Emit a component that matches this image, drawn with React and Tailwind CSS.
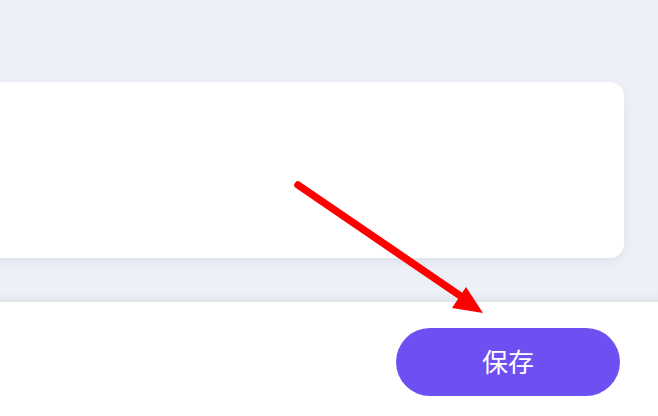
import React from "react";

export default function App() {
  return (
    <div className="relative w-[658px] h-[416px] overflow-hidden bg-white" style={{ fontFamily: '"Noto Sans", "Noto Sans CJK SC", sans-serif' }}>
      <div className="h-[302px] bg-[#eef0f8] pt-[82px] shadow-[inset_0_-10px_10px_-8px_rgba(0,0,0,0.08)]">
        <div className="ml-[-20px] w-[644px] h-[176px] bg-white rounded-[14px] shadow-[0_4px_10px_rgba(60,60,90,0.08)]" />
      </div>
      <div className="flex justify-end pr-[38px] pt-[26px]">
        <button className="w-[224px] h-[68px] rounded-full bg-[#6e4ff2] text-white text-[26px] font-normal leading-none flex items-center justify-center">
          保存
        </button>
      </div>
      <svg className="absolute left-0 top-0" width="658" height="416" viewBox="0 0 658 416">
        <line x1="298" y1="185" x2="462" y2="297" stroke="#ff0000" strokeWidth="7.5" strokeLinecap="round" />
        <polygon points="483,313 452,308 466,287" fill="#ff0000" />
      </svg>
    </div>
  );
}
